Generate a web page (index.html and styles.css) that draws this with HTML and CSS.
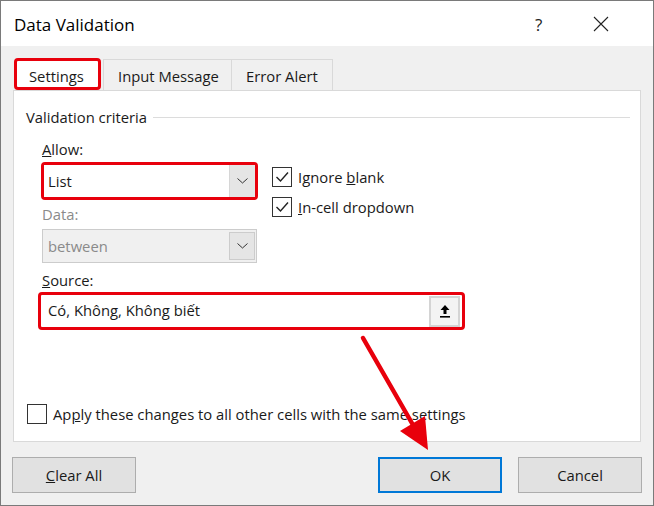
FILE: index.html
```html
<!DOCTYPE html>
<html>
<head>
<meta charset="utf-8">
<link rel="stylesheet" href="styles.css">
</head>
<body>
<div class="window">
  <div class="titlebar">
    <span class="title">Data Validation</span>
    <span class="help">?</span>
    <span class="close"><svg width="16" height="16" viewBox="0 0 16 16"><path d="M1 1L15 15M15 1L1 15" stroke="#222" stroke-width="1.1" fill="none"/></svg></span>
  </div>
  <div class="content">
    <div class="tabs">
      <div class="tab active">Settings</div>
      <div class="tab">Input Message</div>
      <div class="tab last">Error Alert</div>
    </div>
    <div class="panel">
      <div class="group-title"><span>Validation criteria</span><span class="rule"></span></div>
      <div class="criteria">
        <div class="col-left">
          <div class="label"><u>A</u>llow:</div>
          <div class="annot allow">
            <div class="combo">
              <span class="value">List</span>
              <span class="drop"><svg width="11" height="6" viewBox="0 0 11 6"><path d="M0.5 0.5L5.5 5L10.5 0.5" stroke="#333" stroke-width="1" fill="none"/></svg></span>
            </div>
          </div>
          <div class="label disabled data-label">Data:</div>
          <div class="combo off">
            <span class="value">between</span>
            <span class="drop"><svg width="11" height="6" viewBox="0 0 11 6"><path d="M0.5 0.5L5.5 5L10.5 0.5" stroke="#333" stroke-width="1" fill="none"/></svg></span>
          </div>
        </div>
        <div class="col-right">
          <div class="check"><span class="box"><svg width="18" height="18" viewBox="0 0 18 18"><path d="M3.5 9L7.5 13L15 4.5" stroke="#222" stroke-width="1.4" fill="none"/></svg></span><span>Ignore <u>b</u>lank</span></div>
          <div class="check"><span class="box"><svg width="18" height="18" viewBox="0 0 18 18"><path d="M3.5 9L7.5 13L15 4.5" stroke="#222" stroke-width="1.4" fill="none"/></svg></span><span><u>I</u>n-cell dropdown</span></div>
        </div>
      </div>
      <div class="label source-label"><u>S</u>ource:</div>
      <div class="annot source">
        <span class="value">Có, Không, Không biết</span>
        <span class="upload"><svg width="12" height="14" viewBox="0 0 12 14"><path d="M6 1L10.5 6H7.5V10H4.5V6H1.5Z" fill="#000"/><rect x="1" y="12" width="10" height="1.6" fill="#000"/></svg></span>
      </div>
      <div class="check apply"><span class="box"></span><span>Ap<u>p</u>ly these changes to all other cells with the same settings</span></div>
    </div>
    <div class="buttons">
      <div class="btn"><u>C</u>lear All</div>
      <div class="btn ok">OK</div>
      <div class="btn">Cancel</div>
    </div>
  </div>
  <svg class="arrow" width="654" height="506" viewBox="0 0 654 506">
    <line x1="363" y1="338" x2="413" y2="425" stroke="#e8000c" stroke-width="4.5" stroke-linecap="round"/>
    <polygon points="400,431 425,416 428,450" fill="#e8000c"/>
  </svg>
</div>
</body>
</html>
```
FILE: styles.css
```css
* { box-sizing: border-box; }
html, body { margin: 0; padding: 0; background: #fff; }
body {
  font-family: "Open Sans", "Noto Sans", sans-serif;
  font-size: 14.8px;
  color: #1a1a1a;
}
.window {
  position: relative;
  width: 654px;
  height: 506px;
  border: 1px solid #7a7a7a;
  background: #f0f0f0;
  overflow: hidden;
}
.titlebar {
  height: 45px;
  background: #fff;
  display: flex;
  align-items: center;
}
.title {
  font-size: 17px;
  margin-left: 13px;
  padding-top: 2px;
  color: #000;
  flex: 1;
}
.help {
  font-size: 17px;
  color: #222;
  width: 12px;
  margin-right: 46px;
  padding-top: 1px;
}
.close {
  display: flex;
  margin-right: 44px;
}
.content {
  padding: 12px 11px 0 11px;
}
.tabs {
  display: flex;
  align-items: flex-end;
  height: 32px;
  padding-left: 2px;
}
.tab {
  height: 31px;
  padding: 6px 14px 0 14px;
  border: 1px solid #d9d9d9;
  border-bottom: none;
  background: #f0f0f0;
  color: #1a1a1a;
  width: 129px;
  white-space: nowrap;
}
.tab.last { border-left: none; width: 101px; }
.tab.active {
  height: 32px;
  width: 87px;
  background: #fff;
  border: 3px solid #e8000c;
  border-radius: 4px;
  padding: 5px 0 0 12px;
  margin-right: 2px;
}
.panel {
  margin-left: 1px;
  width: 628px;
  height: 352px;
  background: #fff;
  border: 1px solid #d9d9d9;
  padding: 16px 0 0 0;
}
.group-title {
  display: flex;
  align-items: center;
  height: 20px;
  padding-left: 12px;
  padding-right: 10px;
}
.group-title .rule {
  flex: 1;
  height: 1px;
  background: #dcdcdc;
  margin-left: 6px;
  margin-top: 1px;
}
.label {
  height: 20px;
  line-height: 20px;
  padding-left: 1px;
}
.label.disabled { color: #8a8a8a; }
.criteria {
  display: flex;
  margin-top: 12px;
  padding-left: 27px;
}
.col-left { width: 217px; }
.annot.allow {
  margin-top: 3px;
  height: 38px;
  border: 3px solid #e8000c;
  border-radius: 4px;
}
.combo {
  display: flex;
  align-items: stretch;
  height: 100%;
  background: #fff;
}
.combo .value {
  flex: 1;
  padding-left: 4px;
  display: flex;
  align-items: center;
}
.combo .drop {
  width: 26px;
  background: #e5e5e5;
  border-left: 1px solid #d6d6d6;
  display: flex;
  align-items: center;
  justify-content: center;
}
.data-label { margin-top: 4px; }
.combo.off {
  margin-top: 5px;
  height: 34px;
  width: 215px;
  margin-left: 1px;
  background: #f0f0f0;
  border: 1px solid #cccccc;
  color: #8a8a8a;
  padding: 2px 1px 2px 0;
}
.combo.off .value { padding-left: 5px; }
.combo.off .drop {
  border: 1px solid #cccccc;
  background: #e5e5e5;
}
.col-right {
  margin-left: 14px;
  padding-top: 28px;
  display: flex;
  flex-direction: column;
  gap: 10px;
}
.check {
  display: flex;
  align-items: center;
  height: 20px;
  white-space: nowrap;
}
.check .box {
  width: 20px;
  height: 20px;
  border: 1px solid #333;
  background: #fff;
  margin-right: 6px;
  display: flex;
  align-items: center;
  justify-content: center;
  flex: none;
}
.source-label {
  margin-top: 7px;
  margin-left: 27px;
}
.annot.source {
  margin-top: 2px;
  margin-left: 24px;
  width: 427px;
  height: 38px;
  border: 3px solid #e8000c;
  border-radius: 4px;
  display: flex;
  align-items: center;
  padding-right: 2px;
}
.annot.source .value {
  flex: 1;
  padding-left: 7px;
  padding-bottom: 2px;
}
.upload {
  width: 31px;
  height: 31px;
  background: #f3f3f3;
  border: 2px solid #d4d4d4;
  display: flex;
  align-items: center;
  justify-content: center;
}
.check.apply {
  margin-top: 74px;
  margin-left: 13px;
}
.buttons {
  display: flex;
  margin-top: 15px;
  gap: 16px;
}
.btn {
  width: 124px;
  height: 36px;
  background: #e1e1e1;
  border: 1px solid #adadad;
  display: flex;
  align-items: center;
  justify-content: center;
  color: #1a1a1a;
}
.btn.ok {
  margin-left: auto;
  border: 2px solid #0078d7;
}
.arrow {
  position: absolute;
  left: -1px;
  top: -1px;
  pointer-events: none;
}
```
